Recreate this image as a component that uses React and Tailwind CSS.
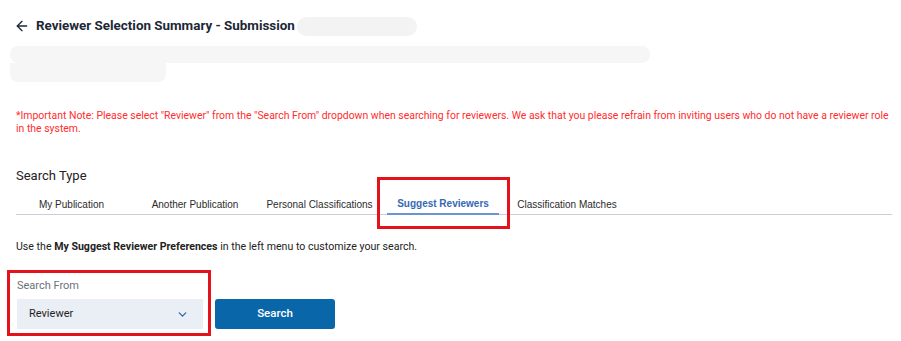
import React from 'react'
import { ArrowLeft, ChevronDown } from 'lucide-react'

const tabs = [
  { label: 'My Publication', w: 'w-[81px]', ml: 'ml-[15px]' },
  { label: 'Another Publication', w: 'w-[102px]', ml: 'ml-[32px]' },
  { label: 'Personal Classifications', w: 'w-[121px]', ml: 'ml-[13px]' },
  { label: 'Suggest Reviewers', w: 'w-[112px]', ml: 'ml-[7px]', active: true },
  { label: 'Classification Matches', w: 'w-[114px]', ml: 'ml-[11px]' },
]

export default function App() {
  return (
    <div className="w-[901px] h-[341px] bg-white overflow-hidden font-['Roboto',sans-serif]">
      {/* Header */}
      <div className="flex items-center h-[20px] mt-[16px] pl-[14px]">
        <ArrowLeft className="h-[16px] w-[16px] text-[#1c2836]" strokeWidth={2} />
        <h1 className="ml-[6px] text-[13.4px] font-bold text-[#1c2836]">
          Reviewer Selection Summary - Submission
        </h1>
        <div className="ml-[2px] h-[19px] w-[120px] rounded-full bg-[#f3f3f3]" />
      </div>

      {/* Redacted description */}
      <div className="mt-[10px] pl-[10px]">
        <div className="h-[17px] w-[640px] rounded-[8px] bg-[#f6f6f6]" />
        <div className="h-[19px] w-[156px] rounded-b-[8px] bg-[#f6f6f6]" />
      </div>

      {/* Note */}
      <p className="mt-[27px] pl-[16px] w-[892px] text-[10.45px] leading-[13px] text-[#ff2d2d]">
        *Important Note: Please select "Reviewer" from the "Search From" dropdown when searching for reviewers. We ask that you please refrain from inviting users who do not have a reviewer role in the system.
      </p>

      {/* Search Type */}
      <h2 className="mt-[33px] pl-[16px] text-[13px] leading-[16px] text-[#222]">Search Type</h2>

      <div className="mt-[9px] ml-[16px] mr-[9px] flex border-b border-[#c9cfd7] font-['Liberation_Sans',Arial,sans-serif]">
        {tabs.map(t => (
          <div
            key={t.label}
            className={`relative ${t.w} ${t.ml} h-[22px] flex items-center justify-center text-[10px] -mb-px ${
              t.active ? 'border-b-2 border-[#6a95d2] text-[#3569b3] font-bold text-[10.4px]' : 'text-[#2b2b2b]'
            }`}
          >
            {t.label}
            {t.active && (
              <div className="absolute -left-[10px] -right-[11px] -top-[16px] -bottom-[16px] border-[3px] border-[#e3121b]" />
            )}
          </div>
        ))}
      </div>

      <p className="mt-[25px] pl-[16px] text-[10.6px] leading-[13px] text-[#222]">
        Use the <span className="font-bold">My Suggest Reviewer Preferences</span> in the left menu to customize your search.
      </p>

      {/* Search From */}
      <div className="mt-[17px] ml-[7px] flex items-end">
        <div className="w-[204px] h-[66px] border-[3px] border-[#e3121b] pl-[7px] pr-[5px] pt-[6px]">
          <div className="text-[11px] leading-[13px] text-[#6b717a]">Search From</div>
          <div className="mt-[7px] h-[30px] bg-[#eaeef5] flex items-center justify-between pl-[12px] pr-[14px]">
            <span className="text-[11px] text-[#1f1f1f]">Reviewer</span>
            <ChevronDown className="h-[13px] w-[13px] text-[#2d6aad]" strokeWidth={2.5} />
          </div>
        </div>
        <button className="ml-[4px] mb-[7px] w-[120px] h-[30px] rounded-[3px] bg-[#0967a9] text-white text-[11.5px] font-medium">
          Search
        </button>
      </div>
    </div>
  )
}
